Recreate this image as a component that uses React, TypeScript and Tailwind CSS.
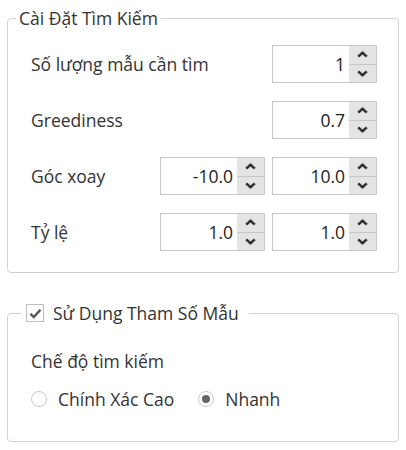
import React from 'react';

const font = { fontFamily: '"Open Sans", "Noto Sans", sans-serif' };

const Chevron = ({ up }: { up?: boolean }) => (
  <svg width="11" height="7" viewBox="0 0 11 7" className="block">
    <polyline
      points={up ? '1.2,5.6 5.5,1.8 9.8,5.6' : '1.2,1.4 5.5,5.2 9.8,1.4'}
      fill="none"
      stroke="#333"
      strokeWidth="2.6"
    />
  </svg>
);

const SpinBox = ({ value }: { value: string }) => (
  <div className="flex h-[38px] w-[105px] border border-[#c8c8c8] bg-white">
    <div className="flex flex-1 items-center justify-end pr-[4px] text-[17.5px] text-[#222]">{value}</div>
    <div className="flex w-[27px] flex-col bg-[#e4e4e4]">
      <div className="flex flex-1 items-center justify-center border-b border-[#c6c6c6]">
        <Chevron up />
      </div>
      <div className="flex flex-1 items-center justify-center">
        <Chevron />
      </div>
    </div>
  </div>
);

const Row = ({ label, children }: { label: string; children: React.ReactNode }) => (
  <div className="flex h-[38px] items-center justify-between">
    <span className="text-[17.5px] text-[#333]">{label}</span>
    <div className="flex gap-[7px]">{children}</div>
  </div>
);

const Radio = ({ label, checked }: { label: string; checked?: boolean }) => (
  <div className="flex items-center gap-[11px]">
    <span className="flex h-[16px] w-[16px] items-center justify-center rounded-full border border-[#c8c8c8] bg-white">
      {checked && <span className="h-[8px] w-[8px] rounded-full bg-[#666]" />}
    </span>
    <span className="text-[17.5px] text-[#333]">{label}</span>
  </div>
);

export default function App() {
  return (
    <div className="min-h-[450px] bg-white px-[7px] pt-[6px]" style={font}>
      {/* Search settings */}
      <fieldset className="w-[392px] rounded-[4px] border border-[#d2d2d2]">
        <legend className="ml-[8px] px-[3px] text-[17.5px] leading-[24px] text-[#333]">Cài Đặt Tìm Kiếm</legend>
        <div className="flex flex-col gap-[18px] pb-[21px] pl-[23px] pr-[21px] pt-[15px]">
          <Row label="Số lượng mẫu cần tìm">
            <SpinBox value="1" />
          </Row>
          <Row label="Greediness">
            <SpinBox value="0.7" />
          </Row>
          <Row label="Góc xoay">
            <SpinBox value="-10.0" />
            <SpinBox value="10.0" />
          </Row>
          <Row label="Tỷ lệ">
            <SpinBox value="1.0" />
            <SpinBox value="1.0" />
          </Row>
        </div>
      </fieldset>

      {/* Template params */}
      <fieldset className="mt-[28px] w-[392px] rounded-[4px] border border-[#d2d2d2]">
        <legend className="ml-[13px] flex items-center gap-[9px] pl-[5px] pr-[10px] text-[17.5px] leading-[24px] text-[#333]">
          <span className="flex h-[18px] w-[18px] items-center justify-center border border-[#bdbdbd] bg-white">
            <svg width="13" height="11" viewBox="0 0 13 11">
              <polyline points="1.5,5.8 4.8,9 11.5,1.8" fill="none" stroke="#555" strokeWidth="2.4" />
            </svg>
          </span>
          <span>Sử Dụng Tham Số Mẫu</span>
        </legend>
        <div className="flex flex-col gap-[14px] pb-[30px] pl-[23px] pt-[24px]">
          <div className="text-[17.5px] leading-[24px] text-[#333]">Chế độ tìm kiếm</div>
          <div className="flex h-[24px] items-center gap-[24px]">
            <Radio label="Chính Xác Cao" />
            <Radio label="Nhanh" checked />
          </div>
        </div>
      </fieldset>
    </div>
  );
}
